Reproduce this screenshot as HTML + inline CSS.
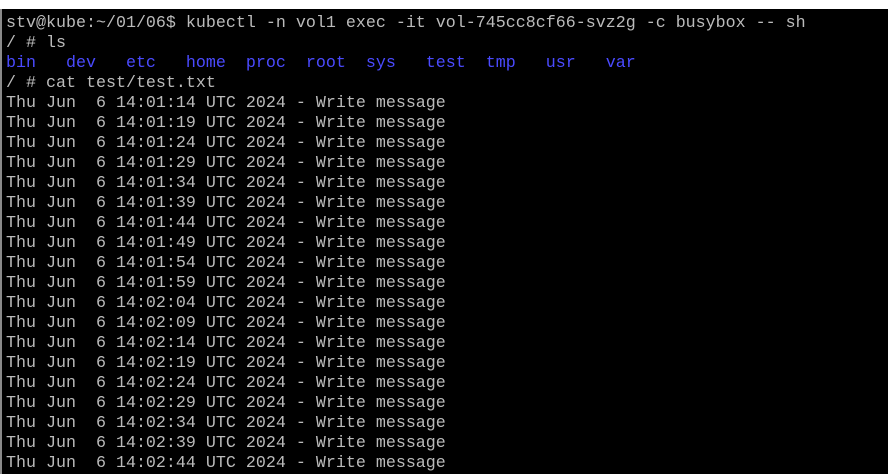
<!DOCTYPE html>
<html><head><style>
html,body{margin:0;padding:0;background:#000;width:888px;height:474px;overflow:hidden}
.top{position:absolute;left:0;top:0;width:888px;height:9px;background:#fff}
.lb{position:absolute;left:0;top:9px;width:2px;height:465px;background:#8a8a8a}
pre{position:absolute;left:6px;top:14px;margin:0;font-family:"Liberation Mono",monospace;font-size:16.67px;line-height:20px;color:#bbbbbb;white-space:pre}
.b{color:#4a4aff}
</style></head><body>
<div class="top"></div><div class="lb"></div>
<pre>stv@kube:~/01/06$ kubectl -n vol1 exec -it vol-745cc8cf66-svz2g -c busybox -- sh
/ # ls
<span class="b">bin   dev   etc   home  proc  root  sys   test  tmp   usr   var</span>
/ # cat test/test.txt
Thu Jun  6 14:01:14 UTC 2024 - Write message
Thu Jun  6 14:01:19 UTC 2024 - Write message
Thu Jun  6 14:01:24 UTC 2024 - Write message
Thu Jun  6 14:01:29 UTC 2024 - Write message
Thu Jun  6 14:01:34 UTC 2024 - Write message
Thu Jun  6 14:01:39 UTC 2024 - Write message
Thu Jun  6 14:01:44 UTC 2024 - Write message
Thu Jun  6 14:01:49 UTC 2024 - Write message
Thu Jun  6 14:01:54 UTC 2024 - Write message
Thu Jun  6 14:01:59 UTC 2024 - Write message
Thu Jun  6 14:02:04 UTC 2024 - Write message
Thu Jun  6 14:02:09 UTC 2024 - Write message
Thu Jun  6 14:02:14 UTC 2024 - Write message
Thu Jun  6 14:02:19 UTC 2024 - Write message
Thu Jun  6 14:02:24 UTC 2024 - Write message
Thu Jun  6 14:02:29 UTC 2024 - Write message
Thu Jun  6 14:02:34 UTC 2024 - Write message
Thu Jun  6 14:02:39 UTC 2024 - Write message
Thu Jun  6 14:02:44 UTC 2024 - Write message</pre>
</body></html>
